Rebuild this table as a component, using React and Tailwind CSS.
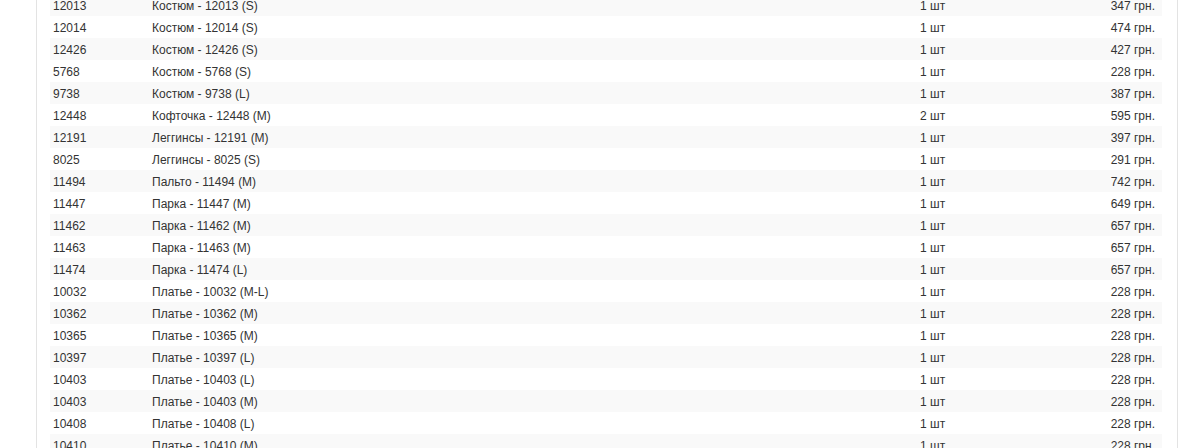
import React from 'react'

const rows = [
  ['12013', 'Костюм - 12013 (S)', '1 шт', '347 грн.'],
  ['12014', 'Костюм - 12014 (S)', '1 шт', '474 грн.'],
  ['12426', 'Костюм - 12426 (S)', '1 шт', '427 грн.'],
  ['5768', 'Костюм - 5768 (S)', '1 шт', '228 грн.'],
  ['9738', 'Костюм - 9738 (L)', '1 шт', '387 грн.'],
  ['12448', 'Кофточка - 12448 (M)', '2 шт', '595 грн.'],
  ['12191', 'Леггинсы - 12191 (M)', '1 шт', '397 грн.'],
  ['8025', 'Леггинсы - 8025 (S)', '1 шт', '291 грн.'],
  ['11494', 'Пальто - 11494 (M)', '1 шт', '742 грн.'],
  ['11447', 'Парка - 11447 (M)', '1 шт', '649 грн.'],
  ['11462', 'Парка - 11462 (M)', '1 шт', '657 грн.'],
  ['11463', 'Парка - 11463 (M)', '1 шт', '657 грн.'],
  ['11474', 'Парка - 11474 (L)', '1 шт', '657 грн.'],
  ['10032', 'Платье - 10032 (M-L)', '1 шт', '228 грн.'],
  ['10362', 'Платье - 10362 (M)', '1 шт', '228 грн.'],
  ['10365', 'Платье - 10365 (M)', '1 шт', '228 грн.'],
  ['10397', 'Платье - 10397 (L)', '1 шт', '228 грн.'],
  ['10403', 'Платье - 10403 (L)', '1 шт', '228 грн.'],
  ['10403', 'Платье - 10403 (M)', '1 шт', '228 грн.'],
  ['10408', 'Платье - 10408 (L)', '1 шт', '228 грн.'],
  ['10410', 'Платье - 10410 (M)', '1 шт', '228 грн.'],
]

export default function App() {
  return (
    <div className="h-[448px] overflow-hidden bg-white font-['Liberation_Sans',Arial,sans-serif] text-[12px] text-[#333]">
      <div className="ml-[36px] w-[1142px] -mt-[6px] border-x border-[#e3e3e3] pl-[13px] pr-[15px] pb-4">
        <table className="w-full table-fixed border-collapse">
          <colgroup>
            <col className="w-[99px]" />
            <col className="w-[768px]" />
            <col className="w-[120px]" />
            <col />
          </colgroup>
          <tbody>
            {rows.map((r, i) => (
              <tr key={i} className={i % 2 === 0 ? 'h-[22px] bg-[#f9f9f9]' : 'h-[22px] bg-white'}>
                <td className="pt-[2px] pl-[3px] align-top leading-[20px]">{r[0]}</td>
                <td className="pt-[2px] pl-[3px] align-top leading-[20px]">{r[1]}</td>
                <td className="pt-[2px] pl-[3px] align-top leading-[20px]">{r[2]}</td>
                <td className="pt-[2px] pr-[7px] text-right align-top leading-[20px]">{r[3]}</td>
              </tr>
            ))}
          </tbody>
        </table>
      </div>
    </div>
  )
}
